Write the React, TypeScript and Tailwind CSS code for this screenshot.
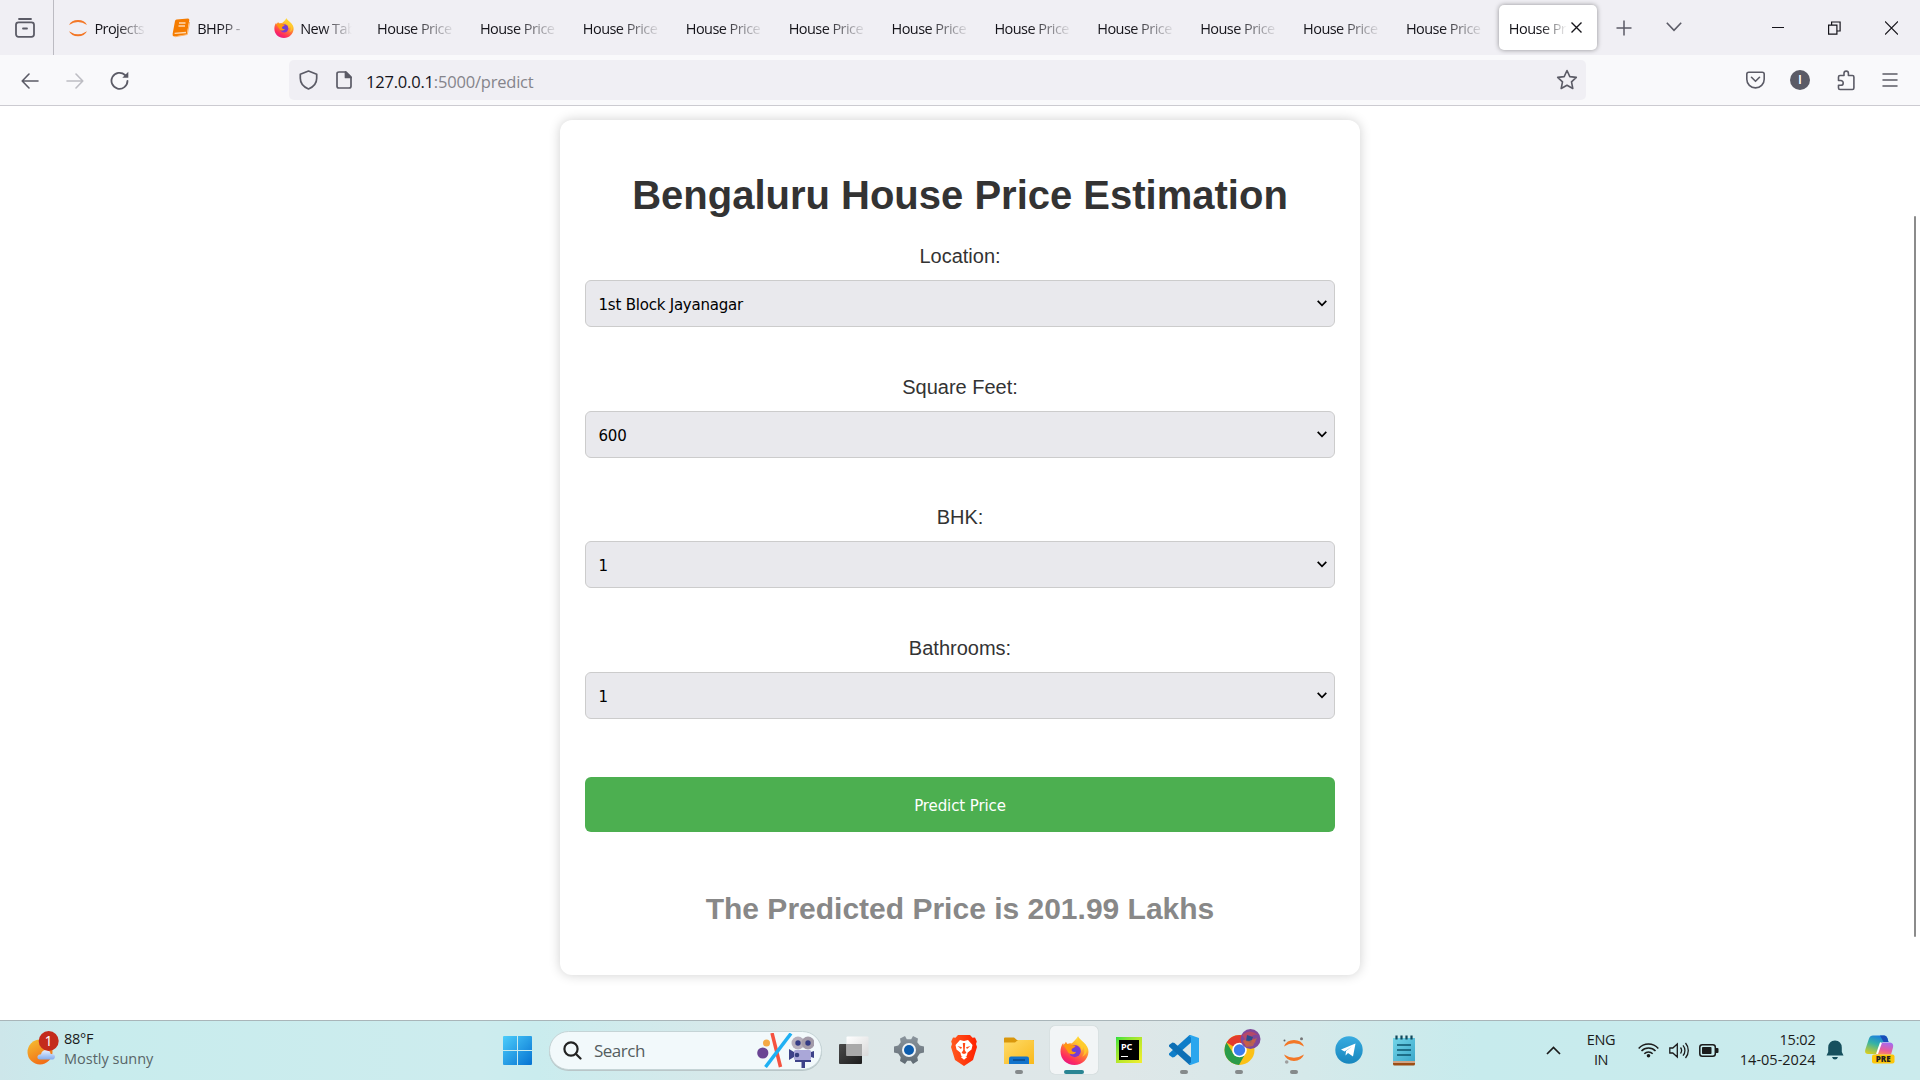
import React from "react";

const uiFont = "font-['Open_Sans','Noto_Sans',sans-serif]";

function Jupyter({ size }: { size: number }) {
  return (
    <svg width={size} height={size} viewBox="0 0 24 24" className="shrink-0">
      <path d="M1.2 8.500A11.6 9.4 0 0 1 22.8 8.500Q12 1.300 1.200 8.500Z" fill="#f37726" />
      <path d="M1.2 16A11.6 9.4 0 0 0 22.8 16Q12 23.200 1.200 16Z" fill="#f37726" />
    </svg>
  );
}

function Book() {
  return (
    <svg width="20" height="20" viewBox="0 0 20 20" className="shrink-0">
      <path d="M5.500 1.500 17 .5q1.500 0 1.300 1.500L16 15.500q-.3 1.500-1.800 1.600L3 18.500Q1.300 18.300 1.600 16L4 3q.3-1.300 1.500-1.500Z" fill="#f57c00" />
      <path d="M3.600 15.300 15 14.500M8 5h6.500M7.500 8H14" stroke="#ffd9b0" strokeWidth="1.300" />
      <path d="m18.600 4-2.300 12.500L4 18.800" stroke="#ffb56b" strokeWidth="1" fill="none" />
    </svg>
  );
}

function Firefox({ size, id }: { size: number; id: string }) {
  return (
    <svg width={size} height={size} viewBox="0 0 28 28" className="shrink-0">
      <defs>
        <linearGradient id={`${id}a`} x1="0.8" y1="0" x2="0.25" y2="1">
          <stop offset="0" stopColor="#fff44f" />
          <stop offset=".3" stopColor="#ffbd2f" />
          <stop offset=".55" stopColor="#ff7139" />
          <stop offset=".8" stopColor="#ff2d5c" />
          <stop offset="1" stopColor="#e31587" />
        </linearGradient>
        <radialGradient id={`${id}b`}>
          <stop offset="0" stopColor="#5b46e0" />
          <stop offset="1" stopColor="#8a35c9" />
        </radialGradient>
      </defs>
      <path d="M17.500 0c.5 3 3 4.200 5 6 3.500 3 5.200 6 5 9.500C27 22.500 21.500 28 14 28S.5 22.500.5 15c0-3 .8-6 2.600-8.200L3.500 9l2.200-3.500 1.500 2.300c1-.6 3-.9 4-.6 1.500-1 4.300-4 6.300-7.200Z" fill={`url(#${id}a)`} />
      <circle cx="14.300" cy="14.600" r="5.800" fill={`url(#${id}b)`} />
      <path d="M3 8.500q4-1.500 7 0l5 .8c0 1.500-2.500 2-3.700 3.200-.6 2 1.400 3.700 4.200 2.700-1.500 3.800-7.300 3-8.500-1Z" fill="#ff980e" />
      <path d="M15.500 6.500c3.500 1 5.500 4 5 8 1.500-1 2-2.500 1.700-4.500 2 3 1.800 8-1.200 10 6-2 6.500-9 2-13.500L17.500 1q0 3-2 5.500Z" fill="#ffcb2b" opacity=".85" />
    </svg>
  );
}

const tabs = [
  { label: "Projects", icon: <Jupyter size={20} /> },
  { label: "BHPP -", icon: <Book /> },
  { label: "New Tab", icon: <Firefox size={20} id="ft" /> },
  ...Array.from({ length: 11 }, () => ({ label: "House Price", icon: null })),
];

function TabStrip() {
  return (
    <div className="flex h-[55px] items-stretch bg-[#f0eff4] text-[#15141a]">
      <div className="flex w-[54px] items-center justify-center border-r border-[#bcbbc2] pr-3">
        <svg width="20" height="20" viewBox="0 0 20 20" fill="none" stroke="#5b5b66" strokeWidth="1.800" strokeLinecap="round" className="ml-2">
          <path d="M4 1h12" />
          <rect x="1" y="4.300" width="18" height="14.500" rx="2.500" />
          <path d="M8 10.500h4" />
        </svg>
      </div>
      <div className="flex pl-[4.400px]">
        {tabs.map((t, i) => (
          <div key={i} className="flex w-[102.9px] items-center pl-[10px]">
            {t.icon}
            <span
              className={`block overflow-hidden whitespace-nowrap pt-0.5 text-[14.500px] leading-5 tracking-[-0.550px] [mask-image:linear-gradient(to_right,black_45%,transparent)] ${t.icon ? "ml-[6px] w-[52px]" : "w-[79px]"}`}
            >
              {t.label}
            </span>
          </div>
        ))}
      </div>
      <div className="mt-[5px] flex h-[45px] w-[98px] items-center rounded-[5px] bg-white pl-[10px] shadow-[0_0_5px_rgba(0,0,0,0.4)]">
        <span className="block w-[58px] overflow-hidden whitespace-nowrap pt-0.5 text-[14.500px] leading-5 tracking-[-0.550px] [mask-image:linear-gradient(to_right,black_55%,transparent)]">
          House Price
        </span>
        <svg width="11" height="11" viewBox="0 0 11 11" stroke="#15141a" strokeWidth="1.400" className="ml-[4px]">
          <path d="m.5.500 10 10m0-10-10 10" />
        </svg>
      </div>
      <svg width="16" height="16" viewBox="0 0 16 16" stroke="#5b5b66" strokeWidth="1.500" className="ml-[19px] mt-[20px]">
        <path d="M8 .5v15M.5 8h15" />
      </svg>
      <svg width="16" height="10" viewBox="0 0 16 10" fill="none" stroke="#5b5b66" strokeWidth="1.600" className="ml-[34px] mt-[22px]">
        <path d="m.8.800 7.200 7.500L15.200.8" />
      </svg>
      <div className="flex flex-1 items-center justify-end gap-[44px] pr-[22px]">
        <svg width="12" height="14" viewBox="0 0 12 14" stroke="#15141a" className="mb-[2px]">
          <path d="M0 7.500h12" />
        </svg>
        <svg width="13" height="14" viewBox="0 0 13 14" fill="none" stroke="#15141a" strokeWidth="1.200">
          <path d="M.6 4.100h8.300v9H.6zM3.600 4V1h8.500v9H9" />
        </svg>
        <svg width="13" height="14" viewBox="0 0 13 14" stroke="#15141a" strokeWidth="1.200">
          <path d="m0 .5 13 13m0-13-13 13" />
        </svg>
      </div>
    </div>
  );
}

function Toolbar() {
  return (
    <div className="flex h-[51px] items-center border-b border-[#cccbd1] bg-[#f9f9fb]">
      <svg width="18" height="16" viewBox="0 0 18 16" fill="none" stroke="#5b5b66" strokeWidth="1.600" strokeLinecap="round" strokeLinejoin="round" className="ml-[21px] mt-px">
        <path d="M17 8H1.200M8 1 1.200 8 8 15" />
      </svg>
      <svg width="18" height="16" viewBox="0 0 18 16" fill="none" stroke="#bdbdc3" strokeWidth="1.600" strokeLinecap="round" strokeLinejoin="round" className="ml-[27px] mt-px">
        <path d="M1 8h15.800M10 1l6.800 7L10 15" />
      </svg>
      <svg width="19" height="19" viewBox="0 0 19 19" fill="none" stroke="#5b5b66" strokeWidth="1.800" strokeLinecap="round" className="ml-[26px] mt-px">
        <path d="M15 4a8 8 0 1 0 2.500 5.800" />
        <path d="M18.300.8v6h-6Z" fill="#5b5b66" stroke="none" />
      </svg>
      <div className="ml-[160px] flex h-10 w-[1297px] items-center rounded-[5px] bg-[#f0eff4]">
        <svg width="19" height="20" viewBox="0 0 19 20" fill="none" stroke="#5b5b66" strokeWidth="1.700" strokeLinejoin="round" className="ml-[10px]">
          <path d="M9.500 1 17.700 4.300v4c0 5-3.200 8.700-8.200 10.700C4.500 17 1.300 13.300 1.300 8.300v-4Z" />
        </svg>
        <svg width="16" height="18" viewBox="0 0 16 18" fill="none" stroke="#5b5b66" strokeWidth="1.700" strokeLinejoin="round" className="ml-[17.500px]">
          <path d="M3 1h7l5 5v9.300q0 1.700-2 1.700H3q-2 0-2-1.700V2.700Q1 1 3 1Z" />
          <path d="M9.500 1v5.500H15Z" fill="#5b5b66" />
        </svg>
        <span className="ml-[14.500px] flex-1 pt-1 text-[16.500px] leading-6 tracking-[-0.200px] text-[#85848b]">
          <span className="text-[#15141a]">127.0.0.1</span>:5000/predict
        </span>
        <svg width="22" height="22" viewBox="0 0 22 22" fill="none" stroke="#5b5b66" strokeWidth="1.600" strokeLinejoin="round" className="mr-[8px]">
          <path d="m11 1.500 2.800 6.100 6.500.8-4.800 4.500 1.300 6.600-5.800-3.300-5.800 3.300 1.300-6.600L1.700 8.400l6.500-.8Z" />
        </svg>
      </div>
      <div className="flex flex-1 items-center justify-end pr-[22px]">
        <svg width="19" height="18" viewBox="0 0 19 18" fill="none" stroke="#5b5b66" strokeWidth="1.600" strokeLinecap="round" strokeLinejoin="round">
          <path d="M2.800 1.200h13.400q2 0 2 2v5a8.700 8.700 0 0 1-17.400 0v-5q0-2 2-2Z" />
          <path d="m5.500 6.300 4 4 4-4" />
        </svg>
        <span className="ml-[25px] flex size-5 items-center justify-center rounded-full bg-[#5b5b66] text-[13px] font-semibold text-white">I</span>
        <svg width="18" height="21" viewBox="0 0 18 21" fill="none" stroke="#5b5b66" strokeWidth="1.600" strokeLinejoin="round" className="ml-[27px]">
          <path d="M1.500 8.500V7q0-1.500 1.500-1.500h4V3.300a2.200 2.200 0 0 1 4.400 0v2.200h4q1.500 0 1.500 1.500v11q0 1.500-1.500 1.500H3q-1.500 0-1.500-1.500v-2.700h2.300a2.300 2.300 0 0 0 0-4.800H1.500Z" />
        </svg>
        <svg width="16" height="14" viewBox="0 0 16 14" stroke="#5b5b66" strokeWidth="1.500" strokeLinecap="round" className="ml-[27px]">
          <path d="M1 1h14M1 7h14M1 13h14" />
        </svg>
      </div>
    </div>
  );
}

const fields = [
  { label: "Location:", value: "1st Block Jayanagar" },
  { label: "Square Feet:", value: "600" },
  { label: "BHK:", value: "1" },
  { label: "Bathrooms:", value: "1" },
];

const formFont = "font-['DejaVu_Sans_Condensed','DejaVu_Sans',sans-serif]";

function Page() {
  return (
    <main className="relative flex h-[914px] justify-center bg-white font-['Liberation_Sans',sans-serif] text-[#333]">
      <section className="mt-[14px] flex h-[855px] w-[800px] flex-col rounded-[12px] bg-white px-[25px] text-center shadow-[0_0_12px_rgba(0,0,0,0.19)]">
        <h1 className="mt-[51px] text-[40px] font-bold leading-[48px]">Bengaluru House Price Estimation</h1>
        <form className="mt-[24px]">
          {fields.map((f) => (
            <div key={f.label} className="h-[130.67px]">
              <label className="block h-[37px] text-[20px] leading-[26px]">{f.label}</label>
              <div className={`flex h-[47px] items-center justify-between rounded-[6px] border border-[#ccc] bg-[#e9e9ed] pl-[12.500px] pr-[7px] text-[16.700px] tracking-[-0.220px] text-black ${formFont}`}>
                <span className="pt-[2px]">{f.value}</span>
                <svg width="10" height="7" viewBox="0 0 10 7" fill="none" stroke="#000" strokeWidth="1.700">
                  <path d="m.7.800 4.300 4.500L9.300.8" />
                </svg>
              </div>
            </div>
          ))}
          <button type="button" className={`mt-[11px] block h-[55px] w-full rounded-[6px] bg-[#4caf50] pt-[2px] text-[16.700px] tracking-[-0.100px] text-white ${formFont}`}>
            Predict Price
          </button>
        </form>
        <h2 className="mt-[59px] text-[30px] font-bold leading-9 text-[#888]">The Predicted Price is 201.99 Lakhs</h2>
      </section>
      <div className="absolute right-[4px] top-[110px] h-[721px] w-[2px] rounded-full bg-[#8b8b8b]" />
    </main>
  );
}

function AppSlot({ children, state }: { children: React.ReactNode; state?: "open" | "active" }) {
  return (
    <div className={`relative flex h-12 w-12 items-center justify-center rounded-[5px] ${state === "active" ? "bg-white/60 shadow-[0_0_1px_rgba(0,0,0,0.25)]" : ""}`}>
      {children}
      {state && <span className={`absolute bottom-0 h-1 rounded-full ${state === "active" ? "w-5 bg-[#2a8593]" : "w-2 bg-[#858a8b]"}`} />}
    </div>
  );
}

function TaskIcons() {
  return (
    <div className="mb-px ml-[8px] flex items-center gap-[7px]">
      <AppSlot>
        <svg width="30" height="29" viewBox="0 0 30 29">
          <defs>
            <linearGradient id="tv" x1="0" y1="0" x2="1" y2="1"><stop stopColor="#4a4a4a" /><stop offset="1" stopColor="#1d1d1d" /></linearGradient>
            <linearGradient id="tw" x1="0" y1="0" x2="1" y2="1"><stop stopColor="#fff" /><stop offset="1" stopColor="#d9d9d9" /></linearGradient>
          </defs>
          <rect y="8" width="23" height="20" rx="1" fill="url(#tv)" />
          <rect x="7.500" y=".5" width="22" height="19.500" rx="1" fill="url(#tw)" />
          <path d="M7.500 8H23v12H7.500z" fill="#a9a9a9" />
        </svg>
      </AppSlot>
      <AppSlot>
        <svg width="30" height="30" viewBox="0 0 30 30">
          <defs>
            <linearGradient id="gg" x1="0" y1="0" x2="0" y2="1"><stop stopColor="#8b959d" /><stop offset="1" stopColor="#5f6a72" /></linearGradient>
          </defs>
          <path d="m11 1 1.800 3.300h4.400L19 1l5 2.500-.7 3.800 2.500 3.300 4.200 1v6l-4.200 1-2.500 3.700.7 3.500L19 29l-2.200-3.300h-3.600L11 29l-5-3 .7-3.700-2.500-3.700-4.200-1v-6l4.200-1 2.500-3.300L6 3.500Z" fill="url(#gg)" />
          <circle cx="15" cy="15" r="7" fill="#eef3f6" />
          <circle cx="15" cy="15" r="5" fill="#0c5cad" />
        </svg>
      </AppSlot>
      <AppSlot>
        <svg width="26" height="31" viewBox="0 0 26 31">
          <defs>
            <linearGradient id="br"><stop stopColor="#ff5a1f" /><stop offset="1" stopColor="#ff2000" /></linearGradient>
          </defs>
          <path d="M7 0h12l2.500 2.800L24 2.500l1.800 4-.8 2.500L26 12l-4 13-9 6-9-6L0 12l1-3L.2 6.500l1.800-4 2.500.3Z" fill="url(#br)" />
          <path d="m9 5 4 1 4-1 4.500 5-1 4.500-4 3.200-.5 2.800-3 2-3-2-.5-2.800-4-3.200-1-4.500Z" fill="#fff" />
          <path d="m6.500 11 4.500 1.200L10 14Zm13 0L15 12.200l1 1.800ZM11.800 8h2.400L13.700 15l1.800 3-2.500 1-2.500-1 1.800-3Z" fill="#ff4a1a" />
          <path d="m9.800 22 3.200-1.600 3.200 1.600-3.200 2.800Z" fill="#fff" />
        </svg>
      </AppSlot>
      <AppSlot state="open">
        <svg width="30" height="27" viewBox="0 0 30 27">
          <defs>
            <linearGradient id="fo" x1="0" y1="0" x2="1" y2="1"><stop stopColor="#ffdb69" /><stop offset="1" stopColor="#f9b91b" /></linearGradient>
          </defs>
          <path d="M1 .5h9L13 3H30v7H0V1.500Q0 .5 1 .5Z" fill="#d9970c" />
          <path d="M0 5.500h11L14 3h15q1 0 1 1v23H0Z" fill="url(#fo)" />
          <path d="M5 27v-5.500Q5 19.500 7 19.500h16q2 0 2 2V27Z" fill="#1173cb" />
          <path d="M9 23h12" stroke="#0a3f78" strokeWidth="1.200" />
        </svg>
      </AppSlot>
      <AppSlot state="active"><Firefox size={29} id="fb" /></AppSlot>
      <AppSlot>
        <div className="flex size-[26px] items-center justify-center bg-linear-to-br from-[#21e03c] via-[#b5e82b] to-[#f4ee30]">
          <div className="flex size-[20px] flex-col bg-black pl-[2px] pt-px font-['Noto_Sans',sans-serif] text-[9px] font-bold leading-[11px] text-white">
            PC
            <span className="mt-[4px] h-px w-[7px] bg-white" />
          </div>
        </div>
      </AppSlot>
      <AppSlot state="open">
        <svg width="30" height="30" viewBox="0 0 30 30">
          <path d="M22 7.500 5.500 22 3.500 22.500 0 20v-1.500L20.500 0 22 .3Z" fill="#0f7ec9" />
          <path d="M22 22.500 5.500 8l-2-.5L0 10v1.500L20.500 30l1.500-.3Z" fill="#0d6fb5" />
          <path d="M21.500 0 30 3v24l-8.500 3-1.500-1 2-1.500v-25L20 1Z" fill="#2ba6ee" />
        </svg>
      </AppSlot>
      <AppSlot state="open">
        <svg width="37" height="37" viewBox="0 0 37 37" className="-mt-[6px] ml-[6px]">
          <circle cx="15.500" cy="21" r="15" fill="#fbc116" />
          <path d="M15.500 21 2.500 13.500A15 15 0 0 1 28.500 13.500L29 14.500H15.500Z" fill="#e33b2e" />
          <path d="M2.500 13.500A15 15 0 0 0 15 36l6.500-11.500L9.300 24.500Z" fill="#2a9c4a" />
          <circle cx="15.500" cy="21" r="7.300" fill="#fff" />
          <circle cx="15.500" cy="21" r="5.700" fill="#3b7ded" />
          <circle cx="26.500" cy="10" r="10" fill="#80479a" />
          <path d="M18 6q8-7 16 0-3-1-6 1l4 7-5-2-4 5-5-4 3-3Z" fill="#b4486a" />
          <path d="m23 6 6 2-2 6-5-2Z" fill="#2b4d8f" />
          <path d="m19 11 6 1 8-3-4 8-7 1Z" fill="#d06a38" opacity=".7" />
        </svg>
      </AppSlot>
      <AppSlot state="open">
        <svg width="22" height="27" viewBox="0 0 22 27">
          <path d="M1 9.500a10.700 10 0 0 1 20 0Q11 3 1 9.500ZM1 17.500a10.700 10 0 0 0 20 0Q11 24 1 17.500Z" fill="#f37726" />
          <circle cx="1.500" cy="3.500" r="1" fill="#616262" />
          <circle cx="18.500" cy="1.700" r="1.500" fill="#767677" />
          <circle cx="3.700" cy="25" r="1.800" fill="#9e9e9e" />
        </svg>
      </AppSlot>
      <AppSlot>
        <svg width="28" height="28" viewBox="0 0 28 28">
          <defs>
            <linearGradient id="tg" x1="0" y1="0" x2="0" y2="1"><stop stopColor="#38abe0" /><stop offset="1" stopColor="#1786bd" /></linearGradient>
          </defs>
          <circle cx="14" cy="14" r="13.700" fill="url(#tg)" />
          <path d="m6 13.500 14.500-6-2.500 13-5-3.500-2.500 2.500.5-4.500L17 10.500l-7.500 5Z" fill="#fff" />
        </svg>
      </AppSlot>
      <AppSlot>
        <svg width="22" height="31" viewBox="0 0 22 31">
          <defs>
            <linearGradient id="np" x1="0" y1="0" x2="1" y2="1"><stop stopColor="#73d5e8" /><stop offset="1" stopColor="#3ba8cb" /></linearGradient>
          </defs>
          <path d="M0 25h22v4q0 1.500-1.500 1.500h-19Q0 30.500 0 29Z" fill="#9c4d14" />
          <path d="M0 26.500h22v1H0z" fill="#fff" />
          <path d="M0 3h22v23H0z" fill="url(#np)" />
          <path d="M4 10h14M4 15h14M4 20h14" stroke="#0d566f" strokeWidth="1.700" />
          <path d="M3.500.5v4M8.500.5v4M13.500.5v4M18.500.5v4" stroke="#12495c" strokeWidth="2.200" />
        </svg>
      </AppSlot>
    </div>
  );
}

function Taskbar() {
  return (
    <footer className="flex h-[60px] items-center border-t border-[#a9b5b9] bg-[linear-gradient(90deg,#cde6ea_0%,#c8eced_5%,#cdecee_25%,#caecee_28%,#dce7e8_42%,#dfe7e8_58%,#d5e9ea_68%,#c7ebed_77%,#cbebed_100%)] text-[#1b1b1b]">
      <div className="flex w-[502px] items-center pl-[27px]">
        <svg width="33" height="36" viewBox="0 0 33 36" className="-mt-1.5">
          <defs>
            <linearGradient id="su" x1="0" y1="0" x2="0.500" y2="1"><stop stopColor="#f5c132" /><stop offset="1" stopColor="#f26f17" /></linearGradient>
            <linearGradient id="cl" x1="0" y1="0" x2="0" y2="1"><stop stopColor="#e9f1ff" /><stop offset="1" stopColor="#83acee" /></linearGradient>
          </defs>
          <circle cx="13" cy="22" r="12.500" fill="url(#su)" />
          <path d="M13 29.500q-3 0-2.500-3.300.7-2 3.500-2 .7-4 5-4.200 4 .2 4.700 4 4-.3 4.300 2.700-.3 2.800-3 2.800Z" fill="url(#cl)" />
          <circle cx="21.700" cy="11" r="10" fill="#c42b1c" />
          <text x="21.700" y="15.700" textAnchor="middle" fontSize="13.500" fontFamily="Noto Sans" fill="#fff">1</text>
        </svg>
        <div className="mb-[3px] ml-[4px] text-[14.500px] leading-[20px]">
          <div className="tracking-[-0.300px]">88°F</div>
          <div className="text-[#586567]">Mostly sunny</div>
        </div>
      </div>
      <svg width="31" height="30" viewBox="0 0 31 30" className="ml-px">
        <defs>
          <linearGradient id="wi" x1="0" y1="0" x2="30" y2="30" gradientUnits="userSpaceOnUse"><stop stopColor="#4ccdfb" /><stop offset="1" stopColor="#036fd0" /></linearGradient>
        </defs>
        <path d="M1 0h13v14H0V1Q0 0 1 0ZM15 0h13q1 0 1 1v13H15ZM0 15h14v14H1q-1 0-1-1ZM15 15h14v13q0 1-1 1H15Z" fill="url(#wi)" />
      </svg>
      <div className="ml-[15px] flex h-[39px] w-[273px] items-center rounded-full border border-[#c5d4d6] bg-[#f2f9fb] shadow-[0_1px_0_#b9c6c8]">
        <svg width="19" height="19" viewBox="0 0 19 19" fill="none" stroke="#222" strokeWidth="2.200" strokeLinecap="round" className="ml-[13px]">
          <circle cx="8" cy="8" r="6.600" /><path d="m13 13 4.500 4.500" />
        </svg>
        <span className="ml-[12px] flex-1 text-[17px] leading-6 tracking-[-0.500px] text-[#555d5f]">Search</span>
        <svg width="57" height="35" viewBox="0 0 57 35" className="mr-[7px]">
          <circle cx="9.500" cy="10" r="3.500" fill="#f5a945" />
          <circle cx="5.800" cy="20" r="5.600" fill="#6a4594" />
          <path d="m15 0 8.500 34" stroke="#f55240" strokeWidth="3.500" />
          <path d="M34 .5 8.500 34" stroke="#1eb0f3" strokeWidth="3.500" />
          <circle cx="41" cy="10" r="6.500" fill="#b6afbc" /><circle cx="51" cy="10" r="6.500" fill="#a39ba9" />
          <circle cx="41" cy="10" r="2.700" fill="#343c85" /><circle cx="51" cy="10" r="2.700" fill="#343c85" />
          <rect x="37" y="17" width="17" height="10" rx="1.500" fill="#aaa7d8" />
          <path d="m32 16 5 3v5l-5 3ZM54 19l3-1v7l-3-1ZM38 27h16v2H38ZM44.500 28h3.500v7h-3.500Z" fill="#3d4289" />
          <circle cx="40" cy="22" r="2.300" fill="#37407f" />
        </svg>
      </div>
      <TaskIcons />
      <div className="mb-px flex flex-1 items-center justify-end pr-[25px]">
        <svg width="15" height="9" viewBox="0 0 15 9" fill="none" stroke="#1b1b1b" strokeWidth="1.700"><path d="m1 8 6.500-6.500L14 8" /></svg>
        <div className="mb-px ml-[22px] w-[36px] text-center text-[14.500px] leading-[20px] tracking-[-0.400px]">ENG<br />IN</div>
        <svg width="21" height="16" viewBox="0 0 21 16" fill="none" stroke="#1b1b1b" strokeWidth="1.500" className="ml-[19px]">
          <path d="M.7 6.500a13 13 0 0 1 19.600 0M3.500 9a9.500 9.500 0 0 1 14 0M6.300 11.700a6 6 0 0 1 8.400 0" />
          <circle cx="10.500" cy="13.800" r="1.800" fill="#1b1b1b" stroke="none" />
        </svg>
        <svg width="21" height="17" viewBox="0 0 21 17" fill="none" stroke="#1b1b1b" strokeWidth="1.300" className="ml-[9.500px]">
          <path d="M.8 6v5h3l4.500 4V2L3.800 6ZM11.500 5.500a5 5 0 0 1 0 6M14 3.300a8 8 0 0 1 0 10.400M16.500 1a11.500 11.500 0 0 1 0 15" />
        </svg>
        <svg width="20" height="13" viewBox="0 0 20 13" className="ml-[9px]">
          <rect x=".8" y=".8" width="15.500" height="11.400" rx="2.500" fill="none" stroke="#1b1b1b" strokeWidth="1.500" />
          <rect x="3" y="3" width="9.500" height="7" rx=".8" fill="#1b1b1b" /><path d="M17 4h1.500q1 0 1 1v3q0 1-1 1H17Z" fill="#1b1b1b" />
        </svg>
        <div className="mb-px ml-[19px] w-[78px] whitespace-nowrap text-right text-[14.500px] leading-[20px]"><div className="tracking-[-0.200px]">15:02</div>14-05-2024</div>
        <svg width="18" height="20" viewBox="0 0 18 20" fill="#17505e" className="ml-[10px]">
          <path d="M9 .5q6.500.4 6.800 7V12l1.700 3.500H.5L2.200 12V7.500Q2.500.9 9 .5ZM6 17h6q-.8 2.500-3 2.500T6 17Z" />
        </svg>
        <svg width="30" height="30" viewBox="0 0 30 30" className="ml-[21.500px]">
          <defs>
            <linearGradient id="ca" x1="0.600" y1="0" x2="0.200" y2="1"><stop stopColor="#1a7de0" /><stop offset=".45" stopColor="#35b3a5" /><stop offset="1" stopColor="#d7cd20" /></linearGradient>
            <linearGradient id="cb" x1="0.600" y1="0" x2="0.300" y2="1"><stop stopColor="#a46cf0" /><stop offset=".6" stopColor="#e65c9f" /><stop offset="1" stopColor="#ff8a5c" /></linearGradient>
          </defs>
          <path d="M8 .5h11q2.500 0 3.500 3l1 3.500h-6l-4.500 12H3q-4 0-2.500-5L4 3.500Q5 .5 8 .5Z" fill="url(#ca)" />
          <path d="M15 .5h4q2.500 0 3.500 3l1 3.500h-5Z" fill="#184eb8" />
          <path d="M18 7.500h7q4 .5 3 5l-2 7H11l3.500-9Q15.500 7.500 18 7.500Z" fill="url(#cb)" />
          <path d="M16 7.500 12 19" stroke="#fff" strokeWidth="2" />
          <rect x="7" y="19.500" width="22.500" height="9" rx="2" fill="#fdc60a" />
          <text x="18.200" y="27" textAnchor="middle" fontSize="8" fontWeight="800" fontFamily="Open Sans" fill="#222">PRE</text>
        </svg>
      </div>
    </footer>
  );
}

export default function App() {
  return (
    <div className={`flex h-[1080px] w-[1920px] flex-col overflow-hidden ${uiFont}`}>
      <TabStrip />
      <Toolbar />
      <Page />
      <Taskbar />
    </div>
  );
}
